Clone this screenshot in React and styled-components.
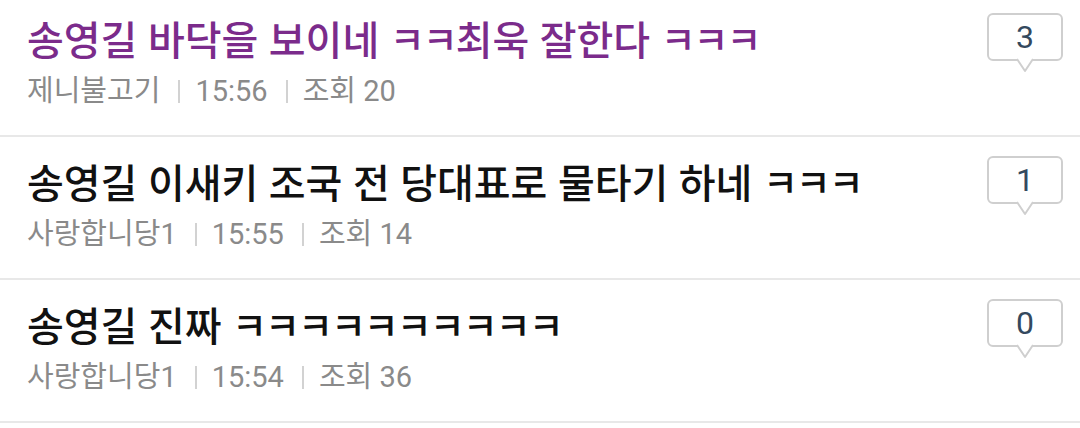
import styled, { createGlobalStyle } from "styled-components";

const posts = [
  { title: "송영길 바닥을 보이네 ㅋㅋ최욱 잘한다 ㅋㅋㅋ", author: "제니불고기", time: "15:56", views: 20, comments: 3, read: true },
  { title: "송영길 이새키 조국 전 당대표로 물타기 하네 ㅋㅋㅋ", author: "사랑합니당1", time: "15:55", views: 14, comments: 1 },
  { title: "송영길 진짜 ㅋㅋㅋㅋㅋㅋㅋㅋㅋㅋ", author: "사랑합니당1", time: "15:54", views: 36, comments: 0 },
];

// loose jamo (ㅋㅋ) run a little narrower than full syllables
const renderTitle = (text) =>
  text.split(/(ㅋ+)/).map((part, i) =>
    part.startsWith("ㅋ") ? <Jamo key={i}>{part}</Jamo> : part
  );

const GlobalStyle = createGlobalStyle`
  html, body {
    margin: 0;
    background: #fff;
    overflow: hidden;
  }
  body {
    font-family: Roboto, "Noto Sans CJK KR", sans-serif;
  }
`;

export default function App() {
  return (
    <>
      <GlobalStyle />
      <List>
        {posts.map((p, i) => (
          <Row key={i}>
            <Body>
              <Title $read={p.read}>{renderTitle(p.title)}</Title>
              <Meta>
                <span>{p.author}</span>
                <Sep />
                <span>{p.time}</span>
                <Sep />
                <span>조회 {p.views}</span>
              </Meta>
            </Body>
            <Bubble>
              {p.comments}
              <Tail width="16" height="14" viewBox="0 0 16 14">
                <polyline points="0,0 8,12 16,0" fill="#fff" stroke="#cfcfcf" strokeWidth="2" strokeLinejoin="round" />
              </Tail>
            </Bubble>
          </Row>
        ))}
      </List>
    </>
  );
}

const List = styled.ul`
  list-style: none;
  margin: -6px 0 0;
  padding: 0;
`;

const Row = styled.li`
  display: flex;
  align-items: flex-start;
  height: 143px;
  box-sizing: border-box;
  padding: 0 17px 0 27px;
  border-bottom: 2px solid #e8e8e8;
`;

const Body = styled.div`
  flex: 1;
  min-width: 0;
  padding-top: 18px;
`;

const Title = styled.div`
  font-family: "Noto Sans CJK KR", Roboto, sans-serif;
  font-size: 40px;
  font-weight: 500;
  line-height: 52px;
  word-spacing: 1.5px;
  color: ${(p) => (p.$read ? "#7b2b8b" : "#111")};
  white-space: nowrap;
`;

const Jamo = styled.span`
  font-size: 38px;
  letter-spacing: -2px;
  vertical-align: 1px;
`;

const Meta = styled.div`
  display: flex;
  align-items: center;
  margin-top: 8px;
  font-size: 29px;
  line-height: 38px;
  color: #8a8a8a;
`;

const Sep = styled.span`
  display: inline-block;
  width: 2px;
  height: 23px;
  background: #d2d2d2;
  margin: 0 15px 0 18px;
`;

const Bubble = styled.div`
  position: relative;
  margin-top: 19px;
  width: 76px;
  height: 48px;
  box-sizing: border-box;
  border: 2px solid #cfcfcf;
  border-radius: 6px;
  display: flex;
  align-items: center;
  justify-content: center;
  font-family: Roboto, sans-serif;
  font-size: 32px;
  color: #34495e;
`;

const Tail = styled.svg`
  position: absolute;
  left: 50%;
  bottom: -14px;
  margin-left: -8px;
  overflow: visible;
`;
